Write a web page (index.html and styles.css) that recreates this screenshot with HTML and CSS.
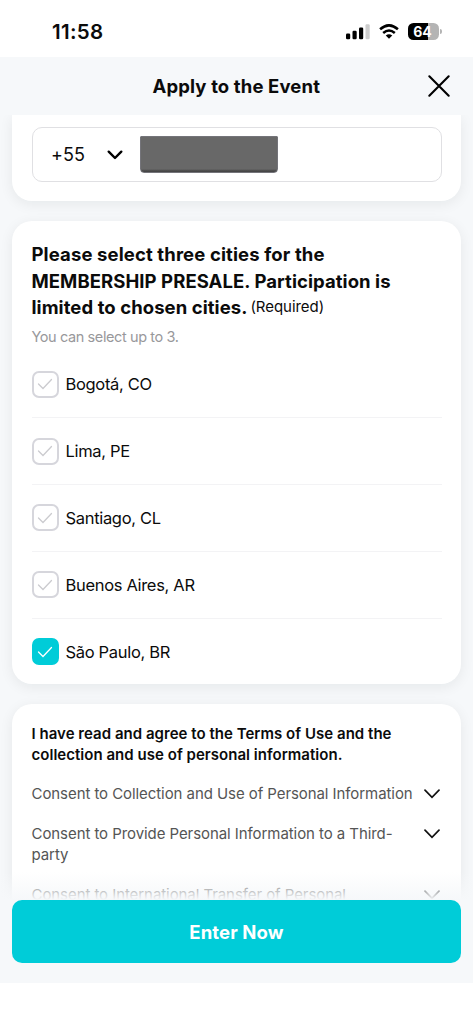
FILE: index.html
```html
<!DOCTYPE html>
<html lang="en">
<head>
<meta charset="utf-8">
<meta name="viewport" content="width=device-width, initial-scale=1">
<title>Apply to the Event</title>
<link rel="stylesheet" href="styles.css">
</head>
<body>
<div class="screen">
  <div class="status">
    <span class="time">11:58</span>
    <div class="indicators">
      <svg class="signal" width="24" height="16" viewBox="0 0 24 16">
        <rect x="0" y="9.5" width="4.2" height="5.7" rx="1.2"/>
        <rect x="6.5" y="6.8" width="4.2" height="8.4" rx="1.2"/>
        <rect x="13" y="3.6" width="4.2" height="11.6" rx="1.2"/>
        <rect x="19.5" y="0.3" width="4.2" height="14.9" rx="1.2" fill="#ccc"/>
      </svg>
      <svg class="wifi" width="20" height="15" viewBox="0 0 21 16" fill="none" stroke="#000" stroke-width="2.7">
        <path d="M1 5.6Q10.500-2.800 20 5.600"/>
        <path d="M4.300 9.600Q10.500 4.300 16.700 9.600"/>
        <path d="M7 12.300Q10.500 9.300 14 12.300L10.500 15.800Z" fill="#000" stroke="none"/>
      </svg>
      <div class="battery"><span class="level">64</span></div>
    </div>
  </div>
  <header class="header">
    <h1 class="heading">Apply to the Event</h1>
    <svg class="close" width="24" height="24" viewBox="0 0 24 24" fill="none" stroke="#000" stroke-width="2.1" stroke-linecap="round"><path d="M2.300 2.300 21.700 21.700M21.700 2.300 2.300 21.700"/></svg>
  </header>
  <main class="content">
    <section class="card phone-card">
      <div class="phone">
        <span class="code">+55</span>
        <svg class="code-arrow" width="16" height="10" viewBox="0 0 16 10" fill="none" stroke="#000" stroke-width="2.4" stroke-linecap="round" stroke-linejoin="round"><path d="M1.700 1.700 8 8l6.300-6.300"/></svg>
        <div class="redacted"></div>
      </div>
    </section>
    <section class="card cities">
      <h2 class="question"><span class="q1">Please select three cities for the</span><br><span class="q2">MEMBERSHIP PRESALE. Participation is</span><br><span class="q3">limited to chosen cities.</span><span class="required">(Required)</span></h2>
      <p class="hint">You can select up to 3.</p>
      <ul class="options">
        <li class="option"><span class="box"><svg class="tick" viewBox="0 0 16 12"><path d="M1.500 6 6 10.500 14.500 1.500"/></svg></span><span class="city">Bogotá, CO</span></li>
        <li class="option"><span class="box"><svg class="tick" viewBox="0 0 16 12"><path d="M1.500 6 6 10.500 14.500 1.500"/></svg></span><span class="city">Lima, PE</span></li>
        <li class="option"><span class="box"><svg class="tick" viewBox="0 0 16 12"><path d="M1.500 6 6 10.500 14.500 1.500"/></svg></span><span class="city">Santiago, CL</span></li>
        <li class="option"><span class="box"><svg class="tick" viewBox="0 0 16 12"><path d="M1.500 6 6 10.500 14.500 1.500"/></svg></span><span class="city">Buenos Aires, AR</span></li>
        <li class="option"><span class="box checked"><svg class="tick" viewBox="0 0 16 12"><path d="M1.500 6 6 10.500 14.500 1.500"/></svg></span><span class="city">São Paulo, BR</span></li>
      </ul>
    </section>
    <section class="card terms">
      <h3 class="agree">I have read and agree to the Terms of Use and the<br>collection and use of personal information.</h3>
      <div class="consent"><span>Consent to Collection and Use of Personal Information</span><svg class="arrow" viewBox="0 0 16 10"><path d="M1 1.200 8 8.300 15 1.200"/></svg></div>
      <div class="consent"><span>Consent to Provide Personal Information to a Third-<br>party</span><svg class="arrow" viewBox="0 0 16 10"><path d="M1 1.200 8 8.300 15 1.200"/></svg></div>
      <div class="consent"><span>Consent to International Transfer of Personal</span><svg class="arrow" viewBox="0 0 16 10"><path d="M1 1.200 8 8.300 15 1.200"/></svg></div>
    </section>
    <div class="fade"></div>
  </main>
  <footer class="footer"><button class="enter">Enter Now</button></footer>
</div>
</body>
</html>
```
FILE: styles.css
```css
* { box-sizing: border-box; }
body, h1, h2, h3, p, ul { margin: 0; padding: 0; }
body { background: #fff; color: #0b0b0b; font-family: Inter, "Liberation Sans", sans-serif; }
svg { display: block; flex: none; }
.screen { display: flex; flex-direction: column; width: 473px; height: 1024px; overflow: hidden; }
.status { display: flex; justify-content: space-between; height: 57px; padding: 20px 34px 0 52px; }
.time { font-size: 20.500px; font-weight: 600; line-height: 24px; letter-spacing: 0.300px; }
.indicators { display: flex; align-items: flex-start; padding-top: 3px; }
.signal { margin: 1px 9px 0 0; }
.wifi { margin: 1px 9px 0 0; }
.battery { position: relative; width: 31px; height: 17px; border-radius: 5.500px; background: linear-gradient(90deg, #000 20px, #b4b4b4 20px); color: #fff; text-align: center; }
.battery::after { content: ""; position: absolute; left: 31.500px; top: 6px; width: 2px; height: 5px; border-radius: 0 2px 2px 0; background: #b4b4b4; }
.level { display: block; font-size: 14px; font-weight: 700; line-height: 17px; padding-right: 2px; }
.header { display: flex; align-items: center; justify-content: space-between; height: 58px; padding: 0 22px 0 152.500px; background: #f6f8fa; }
.heading { font-size: 18.500px; font-weight: 700; line-height: 26px; letter-spacing: 0.130px; white-space: nowrap; }
.content { position: relative; height: 785px; padding: 0 12px; overflow: hidden; background: #f6f8fa; }
.card { background: #fff; border-radius: 20px; box-shadow: 0 3px 14px rgba(20, 25, 35, .07); padding: 0 19.500px; }
.phone-card { height: 86px; padding-top: 12px; border-radius: 0 0 20px 20px; }
.phone { display: flex; align-items: center; width: 410px; height: 55px; padding-left: 18.500px; border: 1.500px solid #e0e0e3; border-radius: 10px; }
.code { width: 56px; font-size: 18px; line-height: 24px; letter-spacing: 0.100px; padding-top: 1px; }
.redacted { width: 138px; height: 37px; margin: 0 0 1px 17px; background: linear-gradient(#686868 0 32px, #464646 34px); border: 1px solid #74747a; border-radius: 1px 1px 4px 4px; }
.cities { height: 463px; margin-top: 20px; padding-top: 20px; }
.question { font-size: 18.500px; font-weight: 700; line-height: 26.600px; white-space: nowrap; }
.q1 { letter-spacing: 0.120px; }
.q2, .q3 { letter-spacing: 0.070px; }
.required { margin-left: 3px; font-size: 15px; font-weight: 400; letter-spacing: -0.050px; position: relative; top: -2px; }
.hint { margin-top: 4px; font-size: 14.500px; line-height: 20px; letter-spacing: -0.400px; color: #98989b; }
.options { list-style: none; margin-top: 4.800px; }
.option { display: flex; align-items: center; height: 66.750px; border-bottom: 1px solid #f3f3f5; }
.option:last-child { border: 0; }
.box { display: flex; align-items: center; justify-content: center; width: 27px; height: 27px; margin-right: 7px; border: 2px solid #d6d6dc; border-radius: 7px; }
.checked { border-color: #00ccd8; background: #00ccd8; }
.tick { width: 16px; height: 12px; fill: none; stroke: #cbcbcf; stroke-width: 1.300; stroke-linecap: round; }
.checked .tick { stroke: #fff; }
.city { font-size: 16.500px; line-height: 24px; letter-spacing: -0.320px; }
.terms { height: 300px; margin-top: 20px; padding-top: 19px; }
.agree { margin-bottom: 18.400px; font-size: 15px; font-weight: 600; line-height: 21px; letter-spacing: 0.030px; white-space: nowrap; }
.consent { display: flex; justify-content: space-between; margin-bottom: 19px; padding-right: 1.500px; font-size: 15px; line-height: 21px; letter-spacing: -0.070px; color: #555; white-space: nowrap; }
.arrow { width: 16px; height: 10px; margin-top: 6px; fill: none; stroke: #111; stroke-width: 1.700; stroke-linecap: round; }
.fade { position: absolute; inset: auto 0 0 0; height: 28px; background: linear-gradient(rgba(246, 248, 250, 0), #f6f8fa); }
.footer { height: 83px; padding: 0 12px; background: #f6f8fa; }
.enter { display: block; width: 449px; height: 63px; border: 0; border-radius: 10px; background: #00ccd8; color: #fff; font: 700 18.500px/26px Inter, "Liberation Sans", sans-serif; letter-spacing: 0.120px; }
```
